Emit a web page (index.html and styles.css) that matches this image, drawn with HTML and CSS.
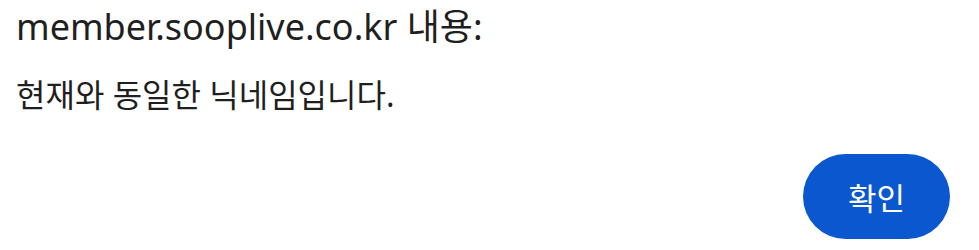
FILE: index.html
```html
<!DOCTYPE html>
<html lang="ko">
<head>
<meta charset="utf-8">
<link rel="stylesheet" href="styles.css">
</head>
<body>
<div class="dialog">
  <div class="title">member.sooplive.co.kr 내용:</div>
  <div class="message">현재와 동일한 닉네임입니다.</div>
  <div class="actions">
    <button class="ok">확인</button>
  </div>
</div>
</body>
</html>
```

FILE: styles.css
```css
html, body {
  margin: 0;
  padding: 0;
  background: #ffffff;
}
body {
  font-family: "Noto Sans", "Noto Sans CJK KR", sans-serif;
  color: #1f1f1f;
}
.dialog {
  width: 979px;
  height: 250px;
  box-sizing: border-box;
  padding: 3px 29px 0 16px;
  display: flex;
  flex-direction: column;
}
.title {
  font-size: 36px;
  line-height: 48px;
}
.message {
  font-size: 32px;
  line-height: 44px;
  margin-top: 22px;
}
.actions {
  display: flex;
  justify-content: flex-end;
  margin-top: 37px;
}
.ok {
  width: 147px;
  height: 85px;
  border: none;
  border-radius: 43px;
  background: #0b57d0;
  color: #ffffff;
  font-family: "Noto Sans", "Noto Sans CJK KR", sans-serif;
  font-size: 31px;
  padding: 0;
}
```
